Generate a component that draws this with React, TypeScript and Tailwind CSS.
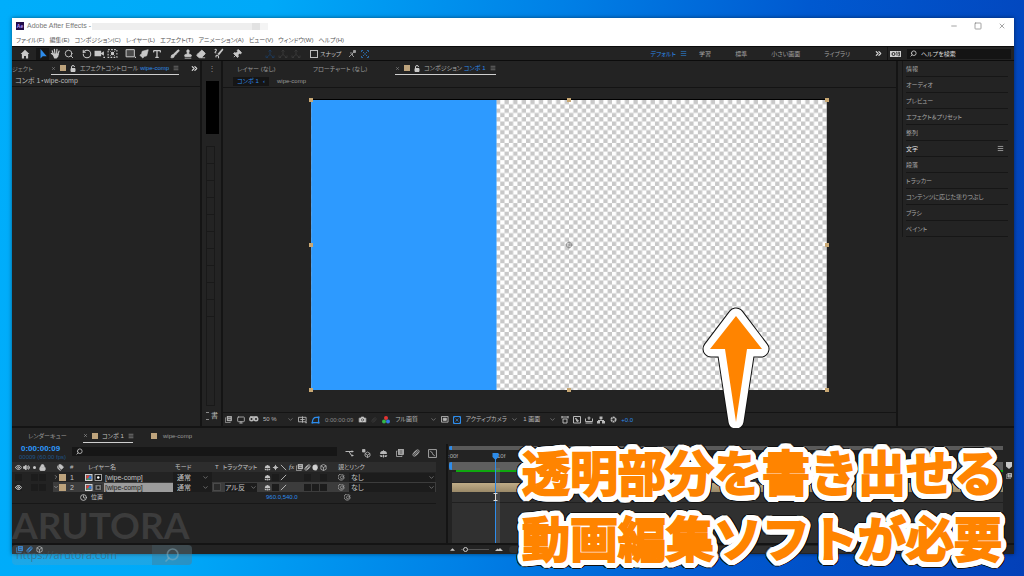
import type { ReactNode } from "react";
import {
  Brush,
  Camera,
  ChevronDown,
  ChevronRight,
  ChevronsRight,
  Clock,
  Eraser,
  Eye,
  Lock,
  Menu,
  Minus,
  Monitor,
  PenTool,
  Pin,
  RotateCcw,
  Search,
  Square,
  Stamp,
  Tags,
  Type,
  Volume2,
  X,
} from "lucide-react";

const menus = [
  "ファイル(F)",
  "編集(E)",
  "コンポジション(C)",
  "レイヤー(L)",
  "エフェクト(T)",
  "アニメーション(A)",
  "ビュー(V)",
  "ウィンドウ(W)",
  "ヘルプ(H)",
];

const sidePanels = [
  "情報",
  "オーディオ",
  "プレビュー",
  "エフェクト＆プリセット",
  "整列",
  "文字",
  "段落",
  "トラッカー",
  "コンテンツに応じた塗りつぶし",
  "ブラシ",
  "ペイント",
];

/** Offsets on a circle, joined into one text-shadow: an outline with round corners. */
function ring(radius: number, color: string) {
  return Array.from({ length: 32 }, (_, i) => {
    const a = (i / 32) * Math.PI * 2;
    return `${(Math.cos(a) * radius).toFixed(2)}px ${(Math.sin(a) * radius).toFixed(2)}px 0 ${color}`;
  }).join(",");
}

const captionOutline = [ring(3, "#ffffff"), ring(6, "#ffffff"), ring(7, "#111111")].join(",");

function Tool({ label, children, className = "" }: { label: string; children: ReactNode; className?: string }) {
  return (
    <button aria-label={label} className={`flex h-3 w-[13px] shrink-0 items-center justify-center ${className}`}>
      {children}
    </button>
  );
}

function Drop({ label, value, className }: { label: string; value: string; className: string }) {
  return (
    <span className={`relative inline-flex h-[9px] items-center ${className}`}>
      <select aria-label={label} className="h-full w-full appearance-none bg-transparent p-0 leading-[9px] outline-none">
        <option>{value}</option>
      </select>
      <ChevronDown className="pointer-events-none absolute right-0 top-px size-[7px] text-[#9a9a9a]" />
    </span>
  );
}

function Swatch() {
  return <span className="inline-block size-[6px] shrink-0 bg-[#bda37c]" />;
}

function Unlock() {
  return (
    <svg viewBox="0 0 12 14" className="h-[7px] w-[6px] shrink-0" fill="none" stroke="#c8c8c8" strokeWidth="2">
      <path d="M3 7V4a3 3 0 0 1 6 0" />
      <path d="M2 7h8v6H2z" fill="#c8c8c8" />
    </svg>
  );
}

function Hand() {
  return (
    <svg viewBox="0 0 20 20" className="size-[11px]" stroke="currentColor" strokeWidth="2.2" strokeLinecap="round" strokeLinejoin="round">
      <path d="M6 11 4 5M9 10 8 2.5M12 10l.6-7.5M14.5 11l2-5.5M6 12l-3.5-2" fill="none" />
      <path d="M5.5 11h9.5l-1 4-2.500 3h-3z" fill="currentColor" />
    </svg>
  );
}

function Marquee() {
  return (
    <svg viewBox="0 0 20 20" className="size-[11px]" fill="none" stroke="currentColor" strokeWidth="2">
      <rect x="2" y="3" width="16" height="14" strokeDasharray="3 2.500" />
      <path d="m6 6 8 8M14 6l-8 8" strokeWidth="1.500" />
      <circle cx="10" cy="10" r="2" fill="currentColor" />
    </svg>
  );
}

function SnapBounds() {
  return (
    <svg viewBox="0 0 16 16" className="size-2" fill="none" stroke="currentColor" strokeWidth="2">
      <path d="M1 4V1h3M12 1h3v3M15 12v3h-3M4 15H1v-3M4 4l3 3M12 4 9 7M4 12l3-3M12 12 9 9" />
    </svg>
  );
}

function Axis() {
  return (
    <svg viewBox="0 0 20 20" className="size-[10px]" fill="none" stroke="currentColor" strokeWidth="1.800">
      <path d="M10 2v9M10 11l-7 6M10 11l7 6M7 5l3-3 3 3M2 13v4h4M18 13v4h-4" />
    </svg>
  );
}

function Spiral() {
  return (
    <svg viewBox="0 0 16 16" className="size-[7px] text-[#aaaaaa]" fill="none" stroke="currentColor" strokeWidth="1.800">
      <path d="M13 3a7 7 0 1 0 1 6c.5-5-6-6-8-3s1 6 4 4 1-4 4-7" />
    </svg>
  );
}

function Shy() {
  return (
    <svg viewBox="0 0 16 16" className="size-full" fill="currentColor">
      <path d="M7 9V2h2v7zM2 8a6 5 0 0 1 12 0v1H2zM1 11h5v3H3zM10 11h5l-2 3h-3zM7 10h2v5H7z" />
    </svg>
  );
}

function Frames() {
  return (
    <svg viewBox="0 0 16 16" className="size-full" fill="none" stroke="currentColor" strokeWidth="1.500">
      <rect x="5" y="1" width="10" height="10" fill="currentColor" />
      <path d="M3 4H1v11h11v-2" />
      <path d="M7 4h6M7 8h6" stroke="#232323" />
    </svg>
  );
}

function Rings() {
  return (
    <svg viewBox="0 0 16 16" className="size-full" fill="none" stroke="currentColor" strokeWidth="1.400">
      <ellipse cx="6" cy="10" rx="5" ry="3.500" transform="rotate(-45 6 10)" />
      <ellipse cx="8" cy="8" rx="5" ry="3.500" transform="rotate(-45 8 8)" />
      <ellipse cx="10" cy="6" rx="5" ry="3.500" transform="rotate(-45 10 6)" />
    </svg>
  );
}

function Cube() {
  return (
    <svg viewBox="0 0 16 16" className="size-full" fill="none" stroke="currentColor" strokeWidth="1.600">
      <path d="m8 1 6 3v8l-6 3-6-3V4zM2 4l6 4 6-4M8 8v7" />
    </svg>
  );
}

function CompIcon({ boxed }: { boxed?: boolean }) {
  return (
    <svg viewBox="0 0 34 14" className="h-[7px] w-[17px] shrink-0">
      <rect width="15" height="14" fill="#d0d0d0" />
      <rect x="2" y="2" width="11" height="10" fill="#5b6770" />
      <circle cx="6" cy="6" r="3.500" fill="#e0402f" />
      <circle cx="10" cy="7" r="3" fill="#2f78e0" />
      <circle cx="7" cy="10" r="2" fill="#42a85a" />
      <rect x="20" y="1" width="13" height="12" fill={boxed ? "#777777" : "#111111"} stroke={boxed ? "#222222" : "#d0d0d0"} strokeWidth="1.500" />
      <circle cx="26.500" cy="7" r="2.500" fill={boxed ? "#222222" : "#ffffff"} />
    </svg>
  );
}

function TitleBar() {
  return (
    <header className="shrink-0 bg-white text-[#777777]">
      <div className="flex h-4 items-center pl-1 pr-2">
        <span className="flex size-2 items-center justify-center bg-[#220a48] text-[5px] font-bold leading-none text-[#b79bff]">Ae</span>
        <span className="ml-[3px] text-[7px] leading-4">Adobe After Effects -</span>
        <span className="ml-px h-[7px] w-40 bg-[#eeeeee]" />
        <span className="h-[7px] w-2 bg-[#e2e2e2]" />
        <span className="h-[7px] w-2 bg-[#f4f4f4]" />
        <div className="ml-auto flex gap-4">
          <button aria-label="最小化"><Minus className="size-2" strokeWidth={2} /></button>
          <button aria-label="最大化"><Square className="size-2" strokeWidth={2} /></button>
          <button aria-label="閉じる"><X className="size-2" strokeWidth={2} /></button>
        </div>
      </div>
      <nav className="flex h-3 items-center gap-[5px] pl-1 text-[6px] leading-3 text-[#555555]">
        {menus.map((m) => (
          <button key={m} className="whitespace-nowrap">{m}</button>
        ))}
      </nav>
    </header>
  );
}

function Toolbar() {
  return (
    <div className="flex h-[15px] shrink-0 items-center border-y border-[#0c0c0c] bg-[#232323] pl-[6px] text-[#c8c8c8]">
      <div className="flex gap-[5px]">
        <Tool label="ホーム">
          <svg viewBox="0 0 16 16" className="size-[10px]" fill="currentColor"><path d="m8 1 7 7h-2v7H9.500v-4h-3v4H3V8H1z" /></svg>
        </Tool>
        <div className="flex">
          <Tool label="選択" className="bg-[#161616] text-[#2d8ceb]">
            <svg viewBox="0 0 16 16" className="size-[10px]" fill="currentColor"><path d="M4 0v15l3.500-3.500H14z" /></svg>
          </Tool>
          <Tool label="手のひら"><Hand /></Tool>
          <Tool label="ズーム"><Search className="size-[10px]" strokeWidth={2.200} /></Tool>
        </div>
        <div className="flex">
          <Tool label="回転"><RotateCcw className="size-[10px]" strokeWidth={2.500} /></Tool>
          <Tool label="カメラ">
            <svg viewBox="0 0 20 16" className="h-[9px] w-[11px]" fill="currentColor"><path d="M1 3h12v4l5-3v8l-5-3v4H1zM17 14h3v2h-3z" /></svg>
          </Tool>
          <Tool label="アンカーポイント"><Marquee /></Tool>
        </div>
        <div className="flex">
          <Tool label="長方形">
            <svg viewBox="0 0 20 16" className="h-[9px] w-[11px]"><path d="M2 1h15v13H2z" fill="#4a4a4a" stroke="#c8c8c8" strokeWidth="1.800" /><path d="M18 14h2v2h-2z" fill="#c8c8c8" /></svg>
          </Tool>
          <Tool label="ペン"><PenTool className="size-[10px] -scale-x-100 fill-current" strokeWidth={1.500} /></Tool>
          <Tool label="文字ツール"><Type className="size-[10px]" strokeWidth={3} /></Tool>
        </div>
        <div className="flex">
          <Tool label="ブラシツール"><Brush className="size-[10px] fill-current" strokeWidth={1.800} /></Tool>
          <Tool label="スタンプ"><Stamp className="size-[10px] fill-current" strokeWidth={2} /></Tool>
          <Tool label="消しゴム"><Eraser className="size-[10px] fill-current" strokeWidth={2} /></Tool>
        </div>
        <Tool label="ロトブラシ">
          <svg viewBox="0 0 20 20" className="size-[11px]" fill="none" stroke="currentColor" strokeWidth="2">
            <path d="M3 3c3-2 4 1 2 3s-2 3 1 3M6 17c-2-3 1-5 3-3s0 4 2 4" />
            <path d="M17 1l2 2-8 10-3-2z" fill="currentColor" strokeWidth="0" />
          </svg>
        </Tool>
        <Tool label="パペットピン"><Pin className="size-[10px] rotate-45 fill-current" strokeWidth={2} /></Tool>
      </div>
      <div className="ml-5 flex">
        <Tool label="ローカル軸" className="text-[#1c3a5c]"><Axis /></Tool>
        <Tool label="ワールド軸" className="text-[#3a3a3a]"><Axis /></Tool>
        <Tool label="ビュー軸" className="text-[#3a3a3a]"><Axis /></Tool>
      </div>
      <label className="ml-2 flex items-center gap-[2px] text-[6px] leading-3">
        <input type="checkbox" className="size-2 appearance-none border border-[#bbbbbb]" />
        スナップ
      </label>
      <div className="ml-1 flex text-[#a0a0a0]">
        <Tool label="スナップ線">
          <svg viewBox="0 0 16 16" className="size-2" fill="none" stroke="currentColor" strokeWidth="1.800"><path d="m2 14 12-12M7 9l5 5M4 6h5v4" /><path d="M11 1h4v4h-4z" fill="currentColor" /></svg>
        </Tool>
        <Tool label="スナップ範囲" className="text-[#2a6aa8]"><SnapBounds /></Tool>
      </div>

      <nav className="ml-auto flex items-center gap-6 text-[6px] leading-3 text-[#a0a0a0]">
        <button className="-mr-3 flex items-center gap-1 text-[#2d8ceb]">デフォルト<Menu className="size-[7px]" /></button>
        <button>学習</button>
        <button>標準</button>
        <button>小さい画面</button>
        <button>ライブラリ</button>
        <button aria-label="その他"><ChevronsRight className="size-[9px] text-[#dddddd]" strokeWidth={3} /></button>
      </nav>
      <span className="ml-1 flex h-[13px] items-center border-l border-[#141414] pl-[2px]">
        <svg viewBox="0 0 22 12" className="h-[6px] w-[11px]" fill="none"><rect width="22" height="12" fill="#d0d0d0" /><circle cx="7" cy="6" r="3" stroke="#222222" strokeWidth="2" /><path d="M12 2.500h2v7M16 2.500h3v3h-3M19 5.500v4h-3" stroke="#222222" strokeWidth="1.500" /></svg>
      </span>
      <label className="ml-[6px] mr-[3px] flex h-[10px] w-[104px] items-center gap-1 bg-[#141414] pl-[3px]">
        <Search className="size-[7px] shrink-0 -scale-x-100" strokeWidth={3} />
        <input aria-label="ヘルプを検索" placeholder="ヘルプを検索" className="w-full bg-transparent text-[6px] leading-[10px] outline-none placeholder:text-[#dddddd]" />
      </label>
    </div>
  );
}

function EffectPanel() {
  return (
    <section className="flex w-[190px] shrink-0 flex-col border-r-2 border-[#141414]">
      <div className="flex h-[15px] shrink-0 items-center whitespace-nowrap text-[6px] leading-3">
        <span className="text-[#8a8a8a]">ジェクト</span>
        <div className="ml-[18px] flex h-[13px] items-center gap-1 border-b border-[#cfcfcf] text-[#a8a8a8]">
          <X className="size-[5px]" />
          <Swatch />
          <Unlock />
          <span>エフェクトコントロール <span className="text-[#2d8ceb]">wipe-comp</span></span>
          <Menu className="size-[6px]" />
        </div>
        <ChevronsRight className="ml-auto mr-px size-[9px] shrink-0 text-[#dddddd]" strokeWidth={3} />
      </div>
      <p className="h-[11px] shrink-0 border-b border-[#141414] pl-[3px] text-[7px] leading-[10px] text-[#b8b8b8]">コンポ 1・wipe-comp</p>
    </section>
  );
}

function AudioStrip() {
  return (
    <section className="flex w-[21px] shrink-0 flex-col border-r-2 border-[#141414] pl-1">
      <span className="h-5 pl-[2px] text-[8px] leading-4 text-[#8a8a8a]">⋮</span>
      <span className="h-[53px] w-[13px] shrink-0 bg-black" />
      <div className="mt-3 flex w-[9px] flex-1 flex-col border border-[#191919]">
        {[0, 1, 2, 3, 4, 5, 6, 7, 8, 9].map((n) => (
          <span key={n} className="h-[17px] border-b border-[#191919]" />
        ))}
      </div>
      <span className="flex h-5 items-center gap-[2px] text-[7px] leading-5 text-[#c0c0c0]">
        <span className="h-2 w-[3px] border-y border-[#8a8a8a]" />書
      </span>
    </section>
  );
}

function Handle({ className }: { className: string }) {
  return <span className={`absolute size-1 bg-[#c9a873] ${className}`} />;
}

function Viewer() {
  return (
    <section className="flex min-w-0 flex-1 flex-col">
      <div className="flex h-[15px] shrink-0 items-center pl-[14px] text-[6px] leading-3 text-[#9a9a9a]">
        <span className="w-[76px]">レイヤー (なし)</span>
        <span className="w-[82px]">フローチャート (なし)</span>
        <div className="flex h-[13px] items-center gap-1 border-b border-[#cfcfcf] text-[#a8a8a8]">
          <X className="size-[5px]" />
          <Swatch />
          <Unlock />
          <span>コンポジション <span className="text-[#2d8ceb]">コンポ 1</span></span>
          <Menu className="size-[6px]" />
        </div>
      </div>
      <div className="flex h-3 shrink-0 items-start gap-2 border-b border-[#141414] pl-[10px] pt-px text-[6px] leading-[9px] text-[#9a9a9a]">
        <span className="flex w-9 justify-between bg-[#151515] px-1 text-[#2d8ceb]">コンポ 1<span>‹</span></span>
        <span>wipe-comp</span>
      </div>
      <div className="flex flex-1 items-start justify-center pl-[18px] pt-[11px]">
        <div className="relative border-t border-black">
          <svg viewBox="0 0 960 540" className="h-[290px] w-[516px]" role="img" aria-label="コンポ 1">
            <defs>
              <pattern id="alpha" width="16" height="16" patternUnits="userSpaceOnUse">
                <rect width="16" height="16" fill="#ffffff" />
                <path d="M0 8h8v8H0zM8 0h8v8H8z" fill="#c8c8c8" />
              </pattern>
            </defs>
            <rect width="960" height="540" fill="url(#alpha)" />
            <rect width="345" height="540" fill="#2d9aff" />
            <g fill="none" stroke="#8a8a8a" strokeWidth="1.500">
              <circle cx="480" cy="270" r="5" />
              <path d="M480 263v14M473 270h14" />
            </g>
          </svg>
          <Handle className="-left-[2px] -top-[2px]" />
          <Handle className="left-1/2 -top-[2px] -translate-x-1/2" />
          <Handle className="-right-[2px] -top-[2px]" />
          <Handle className="-left-[2px] top-1/2 -translate-y-1/2" />
          <Handle className="-right-[2px] top-1/2 -translate-y-1/2" />
          <Handle className="-left-[2px] -bottom-[2px]" />
          <Handle className="left-1/2 -bottom-[2px] -translate-x-1/2" />
          <Handle className="-right-[2px] -bottom-[2px]" />
          <svg viewBox="0 0 70 122" className="absolute -bottom-[38px] left-[390px] h-[122px] w-[70px]" strokeLinejoin="round">
            <path d="M35 10 60 43H46L35 115 24 43H10z" fill="#111111" stroke="#111111" strokeWidth="17" />
            <path d="M35 10 60 43H46L35 115 24 43H10z" fill="#ffffff" stroke="#ffffff" strokeWidth="15" />
            <path d="M35 10 61 43H46L35 116 24 43H9z" fill="#ff8400" />
          </svg>
        </div>
      </div>
      <div className="flex h-[14px] shrink-0 items-center gap-1 whitespace-nowrap border-t border-[#141414] pl-[2px] text-[6px] leading-3 text-[#b8b8b8]">
        <span className="size-[7px]"><Frames /></span>
        <Monitor className="ml-px size-2" strokeWidth={2.500} />
        <svg viewBox="0 0 20 16" className="h-[8px] w-[10px]" fill="none" stroke="currentColor" strokeWidth="3"><circle cx="5" cy="6" r="3.500" /><circle cx="14" cy="6" r="3.500" /><path d="M2 2h15" /></svg>
        <Drop label="拡大率" value="50 %" className="w-[31px]" />
        <svg viewBox="0 0 20 16" className="h-2 w-[9px]" fill="none" stroke="currentColor" strokeWidth="2"><path d="M1 2h17v10H1zM10 0v14M5 7h10M16 14h4" /></svg>
        <svg viewBox="0 0 20 18" className="h-2 w-[9px]" fill="none" stroke="#2d8ceb" strokeWidth="2.500"><path d="M3 15c0-7 3-12 9-12h5v12z" /><path d="M1 13h4v4H1zM15 13h4v4h-4zM15 1h4v4h-4z" fill="#2d8ceb" strokeWidth="0" /></svg>
        <span className="ml-px text-[#8a8a8a]">0:00:00:09</span>
        <Camera className="ml-px size-[9px] fill-[#c8c8c8] stroke-[#4a4a4a]" />
        <span className="size-[6px] text-[#3a3a3a]"><Rings /></span>
        <svg viewBox="0 0 16 16" className="ml-px size-2"><circle cx="8" cy="4" r="4" fill="#e33434" /><circle cx="4" cy="11" r="4" fill="#35b548" /><circle cx="12" cy="11" r="4" fill="#3478e3" /></svg>
        <Drop label="画質" value="フル画質" className="ml-px w-[42px]" />
        <svg viewBox="0 0 18 16" className="h-[7px] w-2" fill="none" stroke="currentColor" strokeWidth="2"><path d="M1 1h15v13H1z" /><path d="M5 5h7v5H5z" fill="currentColor" /></svg>
        <svg viewBox="0 0 16 16" className="size-2" fill="none" stroke="#2d8ceb" strokeWidth="2"><path d="M1 1h14v14H1z" /><path d="m3 3 10 10M13 3 3 13" strokeDasharray="2 2" /></svg>
        <Drop label="カメラ" value="アクティブカメラ" className="w-[53px]" />
        <Drop label="画面数" value="1 画面" className="ml-px w-[33px]" />
        <svg viewBox="0 0 16 16" className="ml-px size-2" fill="none" stroke="currentColor" strokeWidth="2"><path d="M1 2h14M4 6h8v8H4zM2 0v5M14 0v5" /></svg>
        <svg viewBox="0 0 16 16" className="size-2" fill="none" stroke="currentColor" strokeWidth="2"><path d="M1 1h14v13H1z" /><path d="m5 4 6 6-3 1z" fill="currentColor" /></svg>
        <svg viewBox="0 0 16 16" className="size-2" fill="none" stroke="currentColor" strokeWidth="2"><path d="M1 5v6h14V5M8 1v7M5 4h6M1 14h14" /></svg>
        <svg viewBox="0 0 16 16" className="size-2" fill="currentColor"><path d="M5 1h6v5H5zM0 10h6v5H0zM10 10h6v5h-6zM7 6h2v3H7zM2 8h12v2H2z" /></svg>
        <svg viewBox="0 0 16 16" className="ml-px size-[7px]" fill="none" stroke="currentColor" strokeWidth="4"><circle cx="8" cy="8" r="5" strokeDasharray="4 1" /></svg>
        <span className="text-[#2d8ceb]">+0.0</span>
      </div>
    </section>
  );
}

function SideList() {
  return (
    <aside className="w-[118px] shrink-0 border-l-2 border-[#141414] pl-1">
      <ul className="border-l border-[#171717] pl-[3px] pr-[6px]">
        {sidePanels.map((name) => (
          <li key={name} className={`flex h-4 items-center justify-between border-b border-[#161616] text-[6px] leading-4 ${name === "文字" ? "text-[#e0e0e0]" : "text-[#a8a8a8]"}`}>
            <button>{name}</button>
            {name === "文字" && <Menu className="mr-1 size-[7px]" />}
          </li>
        ))}
      </ul>
    </aside>
  );
}

function Toggle({ on }: { on?: ReactNode }) {
  return <span className="flex size-[7px] shrink-0 items-center justify-center bg-[#1c1c1c]">{on}</span>;
}

function LayerRow({ index, selected }: { index: number; selected?: boolean }) {
  return (
    <tr className={`h-[10px] ${selected ? "bg-[#3c3c3c]" : ""}`}>
      <td className="bg-[#232323]">
        <span className="flex gap-px pl-[3px]">
          <Toggle on={selected ? <Eye className="size-[7px] text-[#dddddd]" strokeWidth={3} /> : null} />
          <span className="w-[7px]" />
          <Toggle />
          <Toggle />
        </span>
      </td>
      <td className={selected ? "bg-[#3c3c3c]" : "bg-[#232323]"}>
        <span className="flex items-center">
          {selected ? <ChevronDown className="size-[6px]" /> : <ChevronRight className="size-[6px]" />}
          <span className="size-[7px] bg-[#bda37c]" />
        </span>
      </td>
      <td className="pl-1">{index}</td>
      <td>
        <span className="flex items-center gap-[2px] pl-[5px]">
          <CompIcon boxed={selected} />
          <span className={`h-[9px] flex-1 pl-px leading-[9px] ${selected ? "bg-[#9c9c9c] text-[#222222]" : ""}`}>[wipe-comp]</span>
        </span>
      </td>
      <td className="bg-[#1c1c1c] pl-1"><Drop label="モード" value="通常" className="w-8" /></td>
      <td>
        {selected && (
          <span className="flex items-center gap-1 pl-px">
            <span className="size-2 shrink-0 border border-[#4a4a4a] bg-[#2a2a2a]" />
            <Drop label="トラックマット" value="アル反" className="w-8 bg-[#1c1c1c]" />
          </span>
        )}
      </td>
      <td>
        <span className="flex items-center gap-px pl-[2px]">
          <span className="size-[7px]"><Shy /></span>
          <Toggle />
          <svg viewBox="0 0 16 16" className="size-[7px]" stroke="currentColor" strokeWidth="2"><path d="M2 14 14 2" /></svg>
          <span className="w-[15px]" />
          <Toggle />
          {selected ? <Toggle /> : <span className="w-[7px]" />}
          <Toggle />
        </span>
      </td>
      <td>
        <span className="flex items-center gap-1 pl-[6px]">
          <Spiral />
          <Drop label="親" value="なし" className="w-[86px] bg-[#1c1c1c] pl-[2px]" />
        </span>
      </td>
    </tr>
  );
}

function LayerTable() {
  return (
    <table className="w-[424px] table-fixed border-collapse text-left text-[7px] leading-[9px] text-[#c4c4c4]">
      <colgroup>
        <col className="w-[41px]" />
        <col className="w-[13px]" />
        <col className="w-[14px]" />
        <col className="w-[93px]" />
        <col className="w-[39px]" />
        <col className="w-[50px]" />
        <col className="w-[70px]" />
        <col className="w-[104px]" />
      </colgroup>
      <thead>
        <tr className="h-[10px] bg-[#2d2d2d] text-[6px] [&_th]:font-normal">
          <th>
            <span className="flex items-center gap-px pl-[3px]">
              <Eye className="size-[7px]" strokeWidth={3} />
              <Volume2 className="size-[7px] fill-current" strokeWidth={3} />
              <span className="mx-[2px] size-[3px] rounded-full bg-[#c8c8c8]" />
              <Lock className="size-[7px] fill-current" strokeWidth={3} />
            </span>
          </th>
          <th><Tags className="ml-1 size-[7px] fill-current" strokeWidth={2} /></th>
          <th className="pl-1">#</th>
          <th className="pl-2">レイヤー名</th>
          <th className="pl-[2px]">モード</th>
          <th>
            <span className="flex gap-1 whitespace-nowrap pl-[3px]"><span>T</span><span>トラックマット</span></span>
          </th>
          <th>
            <span className="flex items-center gap-px pl-[2px]">
              <span className="size-[7px]"><Shy /></span>
              <svg viewBox="0 0 16 16" className="size-[7px]" fill="none" stroke="currentColor" strokeWidth="2"><circle cx="8" cy="8" r="3" /><path d="M8 2v12M2 8h12" /></svg>
              <svg viewBox="0 0 16 16" className="size-[7px]" stroke="currentColor" strokeWidth="2"><path d="m2 2 12 12" /></svg>
              <i className="w-[7px] text-center font-['Liberation_Serif',serif] text-[7px]">fx</i>
              <span className="size-[7px]"><Frames /></span>
              <span className="size-[7px]"><Rings /></span>
              <svg viewBox="0 0 16 16" className="size-[7px]"><circle cx="8" cy="8" r="7" fill="#d0d0d0" /><path d="M10 2a6 6 0 0 1 0 12 7 7 0 0 0 0-12" fill="#222222" /></svg>
              <span className="size-[7px]"><Cube /></span>
            </span>
          </th>
          <th className="pl-[6px]">親とリンク</th>
        </tr>
      </thead>
      <tbody>
        <LayerRow index={1} />
        <LayerRow index={2} selected />
        <tr className="h-[11px] border-b border-[#171717] text-[6px]">
          <td colSpan={3} />
          <td colSpan={3}>
            <span className="flex items-center gap-1"><Clock className="size-[7px]" strokeWidth={3} />位置</span>
          </td>
          <td className="pl-1 text-[#2d8ceb]">960.0,540.0</td>
          <td><span className="block pl-3"><Spiral /></span></td>
        </tr>
      </tbody>
    </table>
  );
}

function Tracks() {
  return (
    <div className="relative flex min-w-0 flex-1 flex-col border-l-2 border-[#141414] bg-[#232323]">
      <div className="ml-px mt-[2px] flex h-1 items-center bg-[#5a5a5a]"><span className="h-full w-[3px] rounded-l-full bg-[#2d8ceb]" /></div>
      <div className="flex h-3 items-center gap-[39px] text-[6px] leading-3 text-[#b0b0b0]"><span>:00f</span><span>10f</span></div>
      <div className="ml-px flex h-2 bg-[#5f5f5f]"><span className="w-[3px] rounded-l-full bg-[#2d8ceb]" /></div>
      <div className="ml-2 h-[2px] bg-[#0fa80f]" />
      <div className="ml-1 flex flex-1 flex-col bg-[#303030]">
        <div className="h-[11px] border-b border-[#252525]" />
        <div className="h-[9px] bg-[linear-gradient(#c0ad87,#9b8a69)]" />
        <div className="h-[11px] border-b border-[#202020]" />
      </div>
      <span className="absolute bottom-0 left-[48px] top-6 w-[4px] bg-[#8a8a8a]/25" />
      <span className="absolute bottom-0 left-[47px] top-3 w-px bg-[#2d8ceb]" />
      <svg viewBox="0 0 14 14" className="absolute left-11 top-[9px] size-[7px]"><path d="M1 0h12v8l-6 6-6-6z" fill="#2d8ceb" /></svg>
      <svg viewBox="0 0 10 16" className="absolute left-[45px] top-[49px] h-2 w-[5px]" fill="none" stroke="#dddddd" strokeWidth="2"><path d="M1 1h8M5 1v14M1 15h8" /></svg>
    </div>
  );
}

function Timeline() {
  return (
    <section className="flex h-[126px] shrink-0 flex-col bg-[#232323]">
      <div className="flex h-4 shrink-0 items-center whitespace-nowrap pl-4 text-[6px] leading-3 text-[#9a9a9a]">
        <span className="w-[55px]">レンダーキュー</span>
        <div className="flex h-[13px] w-[50px] items-center gap-1 border-b border-[#cfcfcf] text-[#c0c0c0]">
          <X className="size-[5px] shrink-0" />
          <Swatch />
          <span>コンポ 1</span>
          <Menu className="size-[6px] shrink-0" />
        </div>
        <span className="ml-[18px] flex items-center gap-[6px]"><Swatch />wipe-comp</span>
      </div>
      <div className="flex min-h-0 flex-1">
        <div className="flex w-[434px] shrink-0 flex-col">
          <div className="flex h-[18px] shrink-0 pl-[7px]">
            <div className="w-[53px] whitespace-nowrap">
              <p className="pl-[2px] text-[8px] font-bold leading-[10px] text-[#2d9aff]">0:00:00:09</p>
              <p className="text-[6px] leading-[7px] text-[#1f5488]">00009 (60.00 fps)</p>
            </div>
            <label className="mt-[3px] flex h-[9px] w-[265px] items-center bg-[#161616] pl-1">
              <Search className="size-[7px] shrink-0 -scale-x-100 text-[#bbbbbb]" strokeWidth={3} />
              <input aria-label="レイヤーを検索" className="w-full bg-transparent text-[7px] outline-none" />
            </label>
            <div className="ml-2 flex flex-1 items-center justify-between pr-[9px] text-[#b8b8b8]">
              <svg viewBox="0 0 18 16" className="size-[9px]" fill="none" stroke="currentColor" strokeWidth="2"><path d="M1 4h7l5 8h4M8 4h9M14 2v4M14 10v4" /></svg>
              <svg viewBox="0 0 18 18" className="size-[9px]" fill="none" stroke="currentColor" strokeWidth="1.600"><path d="m11 6 5 3v5l-5 3-5-3V9zM6 9l5 3 5-3M11 12v5" /><path d="M1 1h5v5H1z" fill="currentColor" /></svg>
              <span className="size-[9px]"><Shy /></span>
              <span className="size-2"><Frames /></span>
              <span className="size-2"><Rings /></span>
              <svg viewBox="0 0 16 16" className="size-[9px]" fill="none" stroke="currentColor" strokeWidth="1.500"><path d="M1 1h14v14H1zM4 4c4 0 4 8 8 8" /></svg>
            </div>
          </div>
          <LayerTable />
        </div>
        <Tracks />
        <div className="flex w-[11px] shrink-0 flex-col items-center gap-1 pt-[18px] text-[#c8c8c8]">
          <svg viewBox="0 0 12 14" className="h-[7px] w-[6px]" fill="currentColor"><path d="M0 0h12v9l-6 5-6-5z" /></svg>
          <span className="size-[6px]"><Frames /></span>
        </div>
      </div>
      <div className="flex h-[11px] shrink-0 items-center gap-[3px] border-t-2 border-[#141414] pl-1 text-[#2d8ceb]">
        <span className="size-[7px]"><Frames /></span>
        <span className="size-[7px]"><Rings /></span>
        <span className="size-[7px] text-[#c8c8c8]"><Cube /></span>
        <div className="ml-[404px] flex flex-1 items-center gap-[6px] pr-3">
          <svg viewBox="0 0 12 6" className="h-[3px] w-[5px]" fill="#c8c8c8"><path d="m0 6 6-6 6 6z" /></svg>
          <input type="range" aria-label="ズーム" defaultValue={10} className="h-px w-7 appearance-none bg-[#555555] [&::-webkit-slider-thumb]:size-[5px] [&::-webkit-slider-thumb]:appearance-none [&::-webkit-slider-thumb]:rounded-full [&::-webkit-slider-thumb]:border [&::-webkit-slider-thumb]:border-[#cccccc] [&::-webkit-slider-thumb]:bg-[#232323]" />
          <svg viewBox="0 0 16 6" className="h-[3px] w-2" fill="#c8c8c8"><path d="m0 6 5-5 2 2 3-3 6 6z" /></svg>
          <span className="h-[7px] flex-1 rounded-full bg-[#303030]" />
        </div>
      </div>
    </section>
  );
}

export default function App() {
  return (
    <div
      lang="ja"
      className="relative h-screen overflow-hidden bg-[linear-gradient(100deg,#00aefb_0%,#00a9f8_24%,#0080e6_50%,#0059d0_72%,#0340b8_100%)] pb-[22px] pl-3 pr-[10px] pt-[18px] font-['Liberation_Sans','Noto_Sans_CJK_JP',sans-serif] [font-feature-settings:'palt']"
    >
      <main className="flex h-full flex-col overflow-hidden bg-[#232323] shadow-[0_0_4px_rgba(0,0,0,0.5)]">
        <TitleBar />
        <Toolbar />
        <div className="flex min-h-0 flex-1 border-b-2 border-[#141414]">
          <EffectPanel />
          <AudioStrip />
          <Viewer />
          <SideList />
        </div>
        <Timeline />
      </main>

      <div className="absolute bottom-[11px] left-3 w-[180px]">
        <p className="font-['Lato',sans-serif] text-[37px] font-bold leading-10 text-[#888888]/25">ARUTORA</p>
        <div className="flex h-5 rounded-sm bg-[#8a9aa2]/20">
          <input aria-label="URL" placeholder="https://arutora.com" className="min-w-0 flex-1 bg-transparent pl-1 font-['Open_Sans',sans-serif] text-[11px] outline-none placeholder:text-[#4a5a62]/60" />
          <button aria-label="検索" className="flex w-10 items-center justify-center rounded-r-sm bg-[#4a6a7a]/30 text-[#8ab0c0]/50">
            <Search className="size-4 -scale-x-100" strokeWidth={2.5} />
          </button>
        </div>
      </div>

      <p
        className="absolute bottom-[7px] right-[22px] whitespace-nowrap text-right font-['Noto_Sans_CJK_JP',sans-serif] text-[48px] font-bold leading-[66px] text-[#ff8400] [-webkit-text-stroke:2px_#ff8400] [font-feature-settings:normal]"
        style={{ textShadow: captionOutline }}
      >
        透明部分を書き出せる
        <br />
        動画編集ソフトが必要
      </p>
    </div>
  );
}
